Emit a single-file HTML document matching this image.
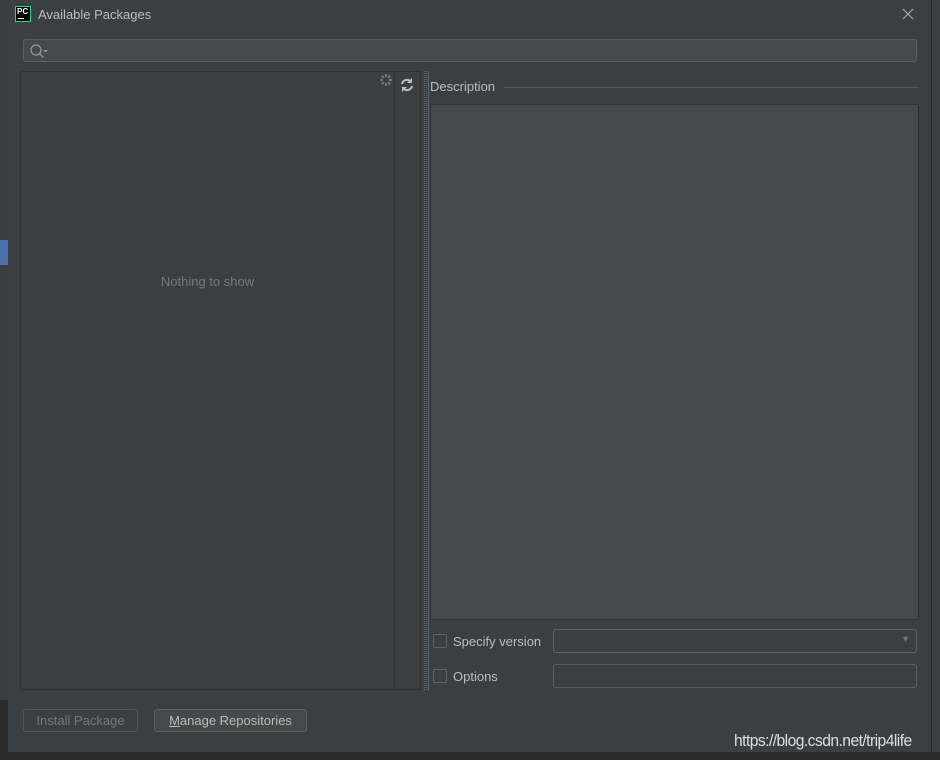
<!DOCTYPE html>
<html><head><meta charset="utf-8"><style>
*{box-sizing:border-box;margin:0;padding:0}
body{width:940px;height:760px;background:#2b2b2b;position:relative;overflow:hidden;font-family:"Liberation Sans",sans-serif;font-size:13px;color:#bbbbbb}
.bgl{position:absolute;left:0;top:0;width:8px;height:700px;background:#3a3d40}
.bgr{position:absolute;left:932px;top:0;width:8px;height:752px;background:#3c3f41}
.dlg{position:absolute;left:8px;top:0;width:924px;height:752px;background:#3c3f41;border-right:1px solid #2b2b2b}
.a{position:absolute}
.list{left:12px;top:71px;width:375px;height:619px;border:1px solid #323232;background:#3c3f41}
.tb{left:387px;top:71px;width:26px;height:619px;border:1px solid #323232;border-left:none;background:#3c3f41}
.desc{left:422px;top:104px;width:489px;height:516px;background:#45494a;border:1px solid #333}
.inp{border:1px solid #5e6060;border-radius:3px;background:#3c3f41}
.cb{width:14px;height:14px;border:1px solid #5e6060;border-radius:2px}
.btn{border:1px solid #5e6060;border-radius:3px;height:23px;text-align:center;line-height:21px}
</style></head><body>
<div class="bgl"></div>
<div class="a" style="left:0;top:240px;width:8px;height:25px;background:#4b6eaf"></div>
<div class="bgr"></div>
<div class="dlg">
 <div class="a" style="left:7px;top:6px;width:16px;height:16px;border:1px solid #21d789;background:#000"><span style="position:absolute;left:1px;top:0;font-size:8px;font-weight:bold;color:#fff">PC</span><span style="position:absolute;left:2px;top:11px;width:6px;height:1px;background:#fff"></span></div>
 <div class="a" style="left:30px;top:7px;font-size:13px;color:#bbb">Available Packages</div>
 <svg class="a" style="left:894px;top:8px" width="12" height="12"><path d="M1 1l10 10M11 1L1 11" stroke="#aaa" stroke-width="1.2"/></svg>
 <div class="a inp" style="left:15px;top:39px;width:894px;height:23px;background:#45494a">
  <svg width="24" height="20" style="position:absolute;left:5px;top:2px"><circle cx="7" cy="8" r="5" fill="none" stroke="#999" stroke-width="1.2"/><path d="M10.5 11.5l4 4" stroke="#999" stroke-width="1.3"/><path d="M14 8h5l-2.5 2.5z" fill="#999"/></svg>
 </div>
 <div class="a list"><div style="position:absolute;left:0;right:0;top:202px;text-align:center;color:#787878">Nothing to show</div></div>
 <svg class="a" style="left:370px;top:72px" width="16" height="16"><g stroke="#888" stroke-width="1.5"><path d="M8 2v3M8 11v3M2 8h3M11 8h3M3.8 3.8l2 2M10.2 10.2l2 2M3.8 12.2l2-2M10.2 5.8l2-2"/></g></svg>
 <div class="a tb"></div>
 <svg class="a" style="left:391px;top:77px" width="16" height="16"><path d="M3 7a5 5 0 0 1 9-2" fill="none" stroke="#bbb" stroke-width="2"/><path d="M13 1v5h-5z" fill="#bbb"/><path d="M13 9a5 5 0 0 1-9 2" fill="none" stroke="#bbb" stroke-width="2"/><path d="M3 15v-5h5z" fill="#bbb"/></svg>
 <div class="a" style="left:416px;top:71px;width:3px;height:619px;border-left:1px dotted #666;border-right:1px dotted #666"></div>
 <div class="a" style="left:420px;top:71px;width:1px;height:619px;background:#5a6a7a"></div>
 <div class="a" style="left:422px;top:79px;color:#bbb">Description</div>
 <div class="a" style="left:496px;top:87px;width:415px;height:1px;background:#555"></div>
 <div class="a desc"></div>
 <div class="a cb" style="left:425px;top:634px"></div>
 <div class="a" style="left:445px;top:634px">Specify version</div>
 <div class="a inp" style="left:545px;top:629px;width:364px;height:24px"><span style="position:absolute;right:6px;top:4px;font-size:9px;color:#777">▼</span></div>
 <div class="a cb" style="left:425px;top:669px"></div>
 <div class="a" style="left:445px;top:669px">Options</div>
 <div class="a inp" style="left:545px;top:664px;width:364px;height:24px"></div>
 <div class="a btn" style="left:15px;top:709px;width:115px;color:#777;border-color:#555">Install Package</div>
 <div class="a btn" style="left:146px;top:709px;width:153px;background:#45494a;color:#bbb"><u>M</u>anage Repositories</div>
</div>
<div class="a" style="left:734px;top:731px;font-size:17px;color:#ddd;letter-spacing:-0.6px;transform:scaleX(0.92);transform-origin:left">https://blog.csdn.net/trip4life</div>
</body></html>
